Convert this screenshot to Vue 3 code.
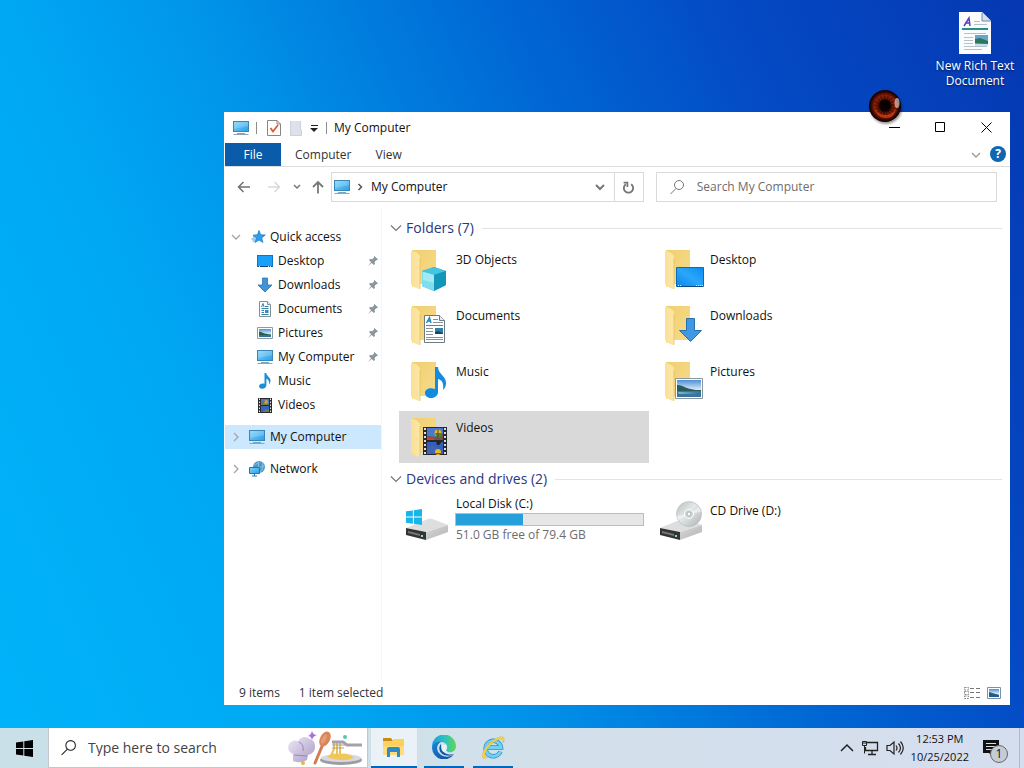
<script setup>
import { ref } from 'vue'

const pinned = [
  { name: 'Desktop', icon: 'desktop', pin: true },
  { name: 'Downloads', icon: 'down', pin: true },
  { name: 'Documents', icon: 'doc', pin: true },
  { name: 'Pictures', icon: 'picture', pin: true },
  { name: 'My Computer', icon: 'pc', pin: true },
  { name: 'Music', icon: 'note', pin: false },
  { name: 'Videos', icon: 'film', pin: false }
]
const folders = [
  { name: '3D Objects', icon: 'cube' },
  { name: 'Desktop', icon: 'f-desktop' },
  { name: 'Documents', icon: 'f-doc' },
  { name: 'Downloads', icon: 'f-down' },
  { name: 'Music', icon: 'f-music' },
  { name: 'Pictures', icon: 'f-picture' },
  { name: 'Videos', icon: 'f-film' }
]
const selected = ref('Videos')
const disk = { total: 79.4, free: 51.0 }
const usedPercent = ((disk.total - disk.free) / disk.total) * 100
const query = ref('')
const taskQuery = ref('')
</script>

<template>
  <div class="screen">
    <svg class="defs" aria-hidden="true">
      <defs>
        <linearGradient id="gScreen" x1="0" y1="0" x2="1" y2="1">
          <stop offset="0" stop-color="#7fd6fb" /><stop offset="1" stop-color="#2c9de8" />
        </linearGradient>
        <linearGradient id="gDesk" x1="0" y1="1" x2="1" y2="0">
          <stop offset="0" stop-color="#0a86e8" /><stop offset=".5" stop-color="#2aa6fb" /><stop offset="1" stop-color="#0d8cf0" />
        </linearGradient>
        <linearGradient id="gBack" x1="0" y1="0" x2="1" y2="1">
          <stop offset="0" stop-color="#f0cf70" /><stop offset="1" stop-color="#f8dc8c" />
        </linearGradient>
        <linearGradient id="gFront" x1="0" y1="0" x2="1" y2="0">
          <stop offset="0" stop-color="#fbe094" /><stop offset="1" stop-color="#fbe7a9" />
        </linearGradient>
        <linearGradient id="gSky" x1="0" y1="0" x2="0" y2="1">
          <stop offset="0" stop-color="#4e8fd6" /><stop offset=".55" stop-color="#d4e8f6" /><stop offset="1" stop-color="#7fa9c6" />
        </linearGradient>
        <linearGradient id="gDrive" x1="0" y1="0" x2="1" y2="1">
          <stop offset="0" stop-color="#d8d8d8" /><stop offset="1" stop-color="#b4b4b4" />
        </linearGradient>
        <linearGradient id="gDisc" x1="0" y1="0" x2="1" y2="1">
          <stop offset="0" stop-color="#b9c1c2" /><stop offset=".45" stop-color="#e3e7e7" /><stop offset="1" stop-color="#abb3b4" />
        </linearGradient>
        <linearGradient id="gEdgeTop" x1="0" y1="0" x2="1" y2="0">
          <stop offset="0" stop-color="#1c9de0" /><stop offset=".55" stop-color="#2fc3c0" /><stop offset="1" stop-color="#62d74f" />
        </linearGradient>
        <linearGradient id="gEdgeLow" x1="0" y1="0" x2="1" y2="1">
          <stop offset="0" stop-color="#1a86d6" /><stop offset="1" stop-color="#10489c" />
        </linearGradient>
        <radialGradient id="gIris" cx=".5" cy=".5" r=".5">
          <stop offset="0" stop-color="#050100" /><stop offset=".3" stop-color="#120200" />
          <stop offset=".45" stop-color="#4d0d03" /><stop offset=".7" stop-color="#7d1a05" />
          <stop offset=".88" stop-color="#2d0601" /><stop offset="1" stop-color="#0b0100" />
        </radialGradient>
        <linearGradient id="gHat" x1="0" y1="0" x2="1" y2="1">
          <stop offset="0" stop-color="#eeeaf6" /><stop offset="1" stop-color="#a999c6" />
        </linearGradient>
      </defs>

      <symbol id="pc" viewBox="0 0 16 16">
        <rect x=".5" y="1.500" width="15" height="10" fill="url(#gScreen)" stroke="#3a87b5" />
        <path d="M1 2h14v4L1 9z" fill="#fff" opacity=".18" />
        <path d="M.5 14.500h15" stroke="#8fa3b0" fill="none" /><path d="M4 13.500h8" stroke="#6fa9c9" />
      </symbol>
      <symbol id="desktop" viewBox="0 0 16 16">
        <rect x=".5" y="2.500" width="15" height="11" fill="#1ba0fa" stroke="#0f75c2" />
        <path d="M1 13.500h14" stroke="#0a4a86" /><path d="M2 13.500h1M11 13.500h1M13 13.500h1" stroke="#d9efff" />
      </symbol>
      <symbol id="down" viewBox="0 0 16 16">
        <path d="M5.500 1h5v7h4.500L8 15 1 8h4.500z" fill="#4193d8" stroke="#2b75ba" stroke-width=".8" />
      </symbol>
      <symbol id="doc" viewBox="0 0 16 16">
        <path d="M2.500.5h8l3 3v12h-11z" fill="#fcfeff" stroke="#7f929c" /><path d="M10.500.5v3h3" fill="#e5edf0" stroke="#7f929c" />
        <path d="M4.500 6 6 2.500 7 6M8 5.500h3.500M4.500 7.500h7M4.500 9.500h2.500M4.500 11.500h2.500M4.500 13.500h7" stroke="#3585aa" fill="none" />
        <path d="M8 9h3.500v3H8z" fill="#3f8db1" />
      </symbol>
      <symbol id="picture" viewBox="0 0 16 16">
        <path d="M.5 2.500h15v11H.5z" fill="#fff" stroke="#8d9ba5" /><path d="M2 4h12v8H2z" fill="url(#gSky)" />
        <path d="M2 6.500c3 .3 5 2.500 12 3V10H2z" fill="#28604f" /><path d="M2 10h12v2H2z" fill="#376f9a" />
      </symbol>
      <symbol id="note" viewBox="0 0 16 16">
        <path d="M7.500 0h1.700c.2 3 4.300 4.200 4.300 7.500 0 1.700-.8 3.200-1.600 3.900.8-3-.4-5.200-2.500-5.700V12c0 2.100-1.900 3.700-4.100 3.700s-3.500-1.200-3.200-2.800c.3-1.800 2.600-3 5.400-2.200z" fill="#178ede" />
      </symbol>
      <symbol id="film" viewBox="0 0 16 16">
        <path d="M1 1h14v15H1z" fill="#282a2d" /><path d="M4 2h8v6H4z" fill="#4d75c8" /><path d="M4 9h8v6H4z" fill="#3763bc" />
        <path d="M2.500 1.500V16M13.500 1.500V16" stroke="#eee" stroke-dasharray="1.500 1.500" />
        <path d="m4 5 8 1v2H4zM6 14l6-2v3H6z" fill="#6b7b50" /><circle cx="9" cy="5" r="2" fill="#c9a336" /><path d="M5 4h3v1H5zM8 12h3v1H8z" fill="#d0472b" />
      </symbol>
      <symbol id="star" viewBox="0 0 16 16">
        <path d="m8 1.500 1.700 4.300 4.600.2-3.600 2.900 1.200 4.600L8 11l-4 2.500 1.400-4.600L2 6.200l4.400-.4z" fill="#2f9df0" stroke="#1779c6" stroke-width=".7" />
        <path d="M2 8h3M.5 10h4M1.500 12h2.500" stroke="#3c9fe6" />
      </symbol>
      <symbol id="network" viewBox="0 0 16 16">
        <circle cx="10" cy="6" r="6" fill="#4b9ac9" /><path d="M5.500 3.500q3 0 4.500-3M9.500 1q-1 5 2 10M6 6.500q5 1 9.500-2M13.500 2q1.500 4-1 8" stroke="#a9d8f1" fill="none" stroke-width=".6" />
        <path d="M.5 6.500h10v6H.5z" fill="url(#gScreen)" stroke="#1878b8" /><path d="M5.500 13v2M3 15h5" stroke="#297eaf" fill="none" />
      </symbol>
      <symbol id="pin" viewBox="0 0 12 12">
        <path d="m7.500 1 3.500 3.500-1 .7-.6-.2-1.700 1.800.2 2.200-1 1L4.800 7.900 1 11l3.100-3.800L2 5.100l1-1 2.200.2L7 2.600l-.2-.6z" fill="#8b959c" />
      </symbol>
      <symbol id="chev-down" viewBox="0 0 12 12"><path d="m2 4 4 4 4-4" fill="none" stroke="currentColor" stroke-width="1.300" /></symbol>
      <symbol id="chev-wide" viewBox="0 0 12 12"><path d="m1 3.500 5 5 5-5" fill="none" stroke="currentColor" stroke-width="1.200" /></symbol>
      <symbol id="chev-right" viewBox="0 0 12 12"><path d="m4 2 4 4-4 4" fill="none" stroke="currentColor" stroke-width="1.300" /></symbol>
      <symbol id="lens" viewBox="0 0 16 16"><circle cx="10" cy="6" r="4.500" fill="none" stroke="currentColor" /><path d="M7 9.500 1.500 15" stroke="currentColor" /></symbol>

      <symbol id="folder" viewBox="0 0 48 48">
        <path d="M8 5h24v34H15L8 42z" fill="url(#gBack)" /><path d="M7 6.500 9 6c3 1 7 3 7 7v31c-3 0-8-3-9-5z" fill="url(#gFront)" /><path d="M16 13v31" stroke="#e5bd59" stroke-width=".7" />
      </symbol>
      <symbol id="cube" viewBox="0 0 48 48">
        <path d="m18 26 12-4 12 4v14l-12 6-12-5z" fill="#1ba8c8" /><path d="m18 26 12 3v17l-12-5z" fill="#7eddee" />
        <path d="m18 26 12-4 12 4-12 4z" fill="#45c3df" /><path d="m30 30 12-4v14l-12 6z" fill="#1297bb" /><path d="m19 27 11 3v8l-11-3z" fill="#b6f0f5" opacity=".65" />
      </symbol>
      <symbol id="f-desktop" viewBox="0 0 48 48">
        <path d="M18.500 22.500h27v19h-27z" fill="url(#gDesk)" stroke="#0d6bb5" /><path d="M19 41.500h26" stroke="#084a85" /><path d="M20 40.500h3M38 40.500h7" stroke="#d6efff" stroke-dasharray="1 1" />
      </symbol>
      <symbol id="f-doc" viewBox="0 0 48 48">
        <path d="M20.500 14.500h15l5 5v22h-20z" fill="#fff" stroke="#6c7b83" /><path d="M35.500 14.500v5h5" fill="#e6eaf0" stroke="#6c7b83" />
        <path d="m22.500 22 3-5.500L27 22m-3-2h3" stroke="#1f83b9" fill="none" stroke-width="1.400" /><path d="M22 24.500h17" stroke="#1ba0a6" />
        <path d="M29 18.500h5M29 21.500h10M22 27.500h7M22 30.500h7M22 33.500h7M22 36.500h17M22 38.500h17" stroke="#83939b" /><path d="M31 27h8v6h-8z" fill="#2d80ac" /><path d="m31 31 3-1 5 2v1h-8z" fill="#17495c" />
      </symbol>
      <symbol id="f-down" viewBox="0 0 48 48">
        <path d="M28.500 17.500h8v12h7L32.500 40.500l-11-11h7z" fill="#3f98e4" stroke="#2770b2" />
      </symbol>
      <symbol id="f-music" viewBox="0 0 48 48">
        <path d="M31 10h3c0 7 8 9 8 16 0 3-1 5-3 7 1-7-1-10-5-11v13c0 4-4 6-7 6s-6-2-6-5c0-4 5-6 10-4z" fill="#128ce0" />
      </symbol>
      <symbol id="f-picture" viewBox="0 0 48 48">
        <path d="M17.500 21.500h27v20h-27z" fill="#fff" stroke="#8b969c" /><path d="M19 23h24v17H19z" fill="url(#gSky)" />
        <path d="M19 28c5-1 8 5 24 5v2H19z" fill="#275d58" /><path d="M19 34h24v6H19z" fill="#3876a1" /><path d="m20 35 20 1-19 1z" fill="#87b6cb" />
      </symbol>
      <symbol id="f-film" viewBox="0 0 48 48">
        <path d="M19 14h24v28H19z" fill="#26282c" /><path d="M23 15h16v12H23z" fill="#4978cc" /><path d="M23 29h16v12H23z" fill="#335eb9" />
        <path d="M21 15v27M41 15v27" stroke="#dce0e4" stroke-width="2" stroke-dasharray="2 2" />
        <path d="m23 23 8 1 8-3v6H23z" fill="#79513e" /><path d="M23 24q4 2 7 1v2h-7z" fill="#d6402e" /><circle cx="34" cy="20" r="3.500" fill="#e3b826" /><path d="M31 20h7v2l-2 3h-3z" fill="#3c8b3d" /><path d="M34 16v10" stroke="#8b2e28" />
        <path d="M23 35q4-5 8-1t8 2v5H23z" fill="#4063b5" /><circle cx="34" cy="39" r="3" fill="#e7b927" /><path d="M32 28h5v2l-2 2h-2z" fill="#1d2824" /><path d="M30 40h8v1h-8z" fill="#cb332a" />
      </symbol>
      <symbol id="drive" viewBox="0 0 48 48">
        <path d="M2 32 24 23q3-1 7 1l13 5-22 7z" fill="#dedede" /><path d="m2 32 20 4v8L2 39z" fill="#343434" /><path d="m22 36 22-7v7L22 44z" fill="url(#gDrive)" />
        <path d="m4 35 12 3v2L4 37z" fill="#777" /><path d="M17 39h2v2h-2z" fill="#77e2b4" />
      </symbol>
      <symbol id="winlogo" viewBox="0 0 17 17"><path d="m0 2.500 7.300-1V8H0zM8.300 1.300 17 0v8H8.300zM0 9h7.300v6.600L0 14.600zM8.300 9H17v8l-8.700-1.200z" fill="currentColor" /></symbol>
    </svg>

    <main class="desk">
      <a href="#" class="shortcut">
        <svg viewBox="0 0 32 42" width="32" height="42">
          <path d="M0 0h23l9 9v33H0z" fill="#fafcfd" /><path d="M23 0v9h9z" fill="#d5e0ec" /><path d="M23 .5V9h9" fill="none" stroke="#7389a8" />
          <path d="m5 14 5-8 1 8m-5-3h5" stroke="#5b3fc0" stroke-width="1.500" fill="none" /><path d="M15 9.500h6M15 12.500h13M5 21.500h22M5 25.500h9M5 28.500h9M5 31.500h9M5 34.500h23M5 37.500h18" stroke="#b4c2c9" />
          <path d="M3 16h26v2H3z" fill="#258e87" /><path d="M16 23h13v11H16z" fill="#64a7cb" /><path d="m16 27 5-1 8 3v3l-13-1z" fill="#2f755d" /><path d="M16 32h13v2H16z" fill="#c3e1ed" />
        </svg>
        <span>New Rich Text Document</span>
      </a>

      <section class="window" aria-label="My Computer">
        <header class="titlebar">
          <svg class="i16"><use href="#pc" /></svg>
          <i class="sep"></i>
          <button class="tool" aria-label="Properties">
            <svg viewBox="0 0 14 16" width="14" height="16"><path d="M.5.5H10L13.500 4v11.500H.5z" fill="#fff" stroke="#8c8482" /><path d="M10 .5V4h3.500" fill="none" stroke="#8c8482" /><path d="m3.500 8 2.500 3.500L11 5" fill="none" stroke="#e15b35" stroke-width="1.800" /></svg>
          </button>
          <button class="tool" aria-label="New folder">
            <svg viewBox="0 0 14 16" width="14" height="16"><path d="M1 1h10v9h2v6H1z" fill="#dde1ea" /><path d="M11.500 1v9h1v5.500M1.500 1v14.500h11" fill="none" stroke="#ccd2dc" /></svg>
          </button>
          <button class="tool caret" aria-label="Customize toolbar">
            <svg viewBox="0 0 8 8" width="8" height="8"><path d="M1 1.500h7" stroke="#222" /><path d="M0 4h8L4 8z" fill="#222" /></svg>
          </button>
          <i class="sep"></i>
          <h1>My Computer</h1>
          <div class="controls">
            <button aria-label="Minimize"><svg viewBox="0 0 11 11"><path d="M0 5.500h11" stroke="#000" /></svg></button>
            <button aria-label="Maximize"><svg viewBox="0 0 11 11"><path d="M.5.5h9v9h-9z" fill="none" stroke="#000" /></svg></button>
            <button aria-label="Close"><svg viewBox="0 0 11 11"><path d="m.5.5 10 10m0-10-10 10" stroke="#000" /></svg></button>
          </div>
        </header>

        <nav class="ribbon">
          <button class="file">File</button>
          <button>Computer</button>
          <button>View</button>
          <button class="expand" aria-label="Expand ribbon"><svg class="i12"><use href="#chev-down" /></svg></button>
          <button class="help" aria-label="Help">?</button>
        </nav>

        <div class="navbar">
          <button class="arrow" aria-label="Back"><svg viewBox="0 0 14 14"><path d="M13 7H1.500M6.500 2l-5 5 5 5" fill="none" stroke="#707070" stroke-width="1.500" /></svg></button>
          <button class="arrow" aria-label="Forward"><svg viewBox="0 0 14 14"><path d="M1 7h11.500M7.500 2l5 5-5 5" fill="none" stroke="#d9d9d9" stroke-width="1.500" /></svg></button>
          <button class="recent" aria-label="Recent locations"><svg viewBox="0 0 8 8" width="8" height="8"><path d="m1 2 3 3 3-3" fill="none" stroke="#777" stroke-width="1.500" /></svg></button>
          <button class="up" aria-label="Up"><svg viewBox="0 0 14 14"><path d="M7 13.500V2M2 7l5-5 5 5" fill="none" stroke="#777" stroke-width="1.800" /></svg></button>
          <div class="address">
            <svg class="i16 place"><use href="#pc" /></svg>
            <svg class="i12 crumb" viewBox="0 0 12 12"><path d="m4.500 3 3 3-3 3" fill="none" stroke="currentColor" stroke-width="1.500" /></svg>
            <span>My Computer</span>
            <button class="drop" aria-label="Previous locations"><svg viewBox="0 0 12 12"><path d="m2 4 4 4 4-4" fill="none" stroke="#777" stroke-width="2" /></svg></button>
            <button class="refresh" aria-label="Refresh"><svg viewBox="0 0 12 12"><path d="M8.500 3A4.300 4.300 0 1 1 3.500 3" fill="none" stroke="#777" stroke-width="1.700" /><path d="M1.500 1.500H5V5.500" fill="none" stroke="#777" stroke-width="1.600" /></svg></button>
          </div>
          <label class="search">
            <svg class="i16"><use href="#lens" /></svg>
            <input v-model="query" type="text" placeholder="Search My Computer" aria-label="Search My Computer" />
          </label>
        </div>

        <div class="body">
          <nav class="tree">
            <button class="row root open"><svg class="i12"><use href="#chev-down" /></svg><svg class="i16"><use href="#star" /></svg><span>Quick access</span></button>
            <button v-for="p in pinned" :key="p.name" class="row leaf">
              <svg class="i16"><use :href="'#' + p.icon" /></svg><span>{{ p.name }}</span>
              <svg v-if="p.pin" class="i12 pin"><use href="#pin" /></svg>
            </button>
            <button class="row root current"><svg class="i12"><use href="#chev-right" /></svg><svg class="i16"><use href="#pc" /></svg><span>My Computer</span></button>
            <button class="row root"><svg class="i12"><use href="#chev-right" /></svg><svg class="i16"><use href="#network" /></svg><span>Network</span></button>
          </nav>

          <div class="content">
            <h2><svg class="i12"><use href="#chev-wide" /></svg><span>Folders (7)</span></h2>
            <div class="tiles">
              <button v-for="f in folders" :key="f.name" class="tile" :class="{ selected: selected === f.name }" @click="selected = f.name">
                <svg class="i48"><use href="#folder" /><use :href="'#' + f.icon" /></svg>
                <span class="name">{{ f.name }}</span>
              </button>
            </div>
            <h2><svg class="i12"><use href="#chev-wide" /></svg><span>Devices and drives (2)</span></h2>
            <div class="tiles">
              <button class="tile">
                <svg class="i48 logo"><use href="#drive" /><use href="#winlogo" x="2" y="13" width="16" height="16" /></svg>
                <span class="disk">
                  <span>Local Disk (C:)</span>
                  <span class="bar" role="progressbar" aria-label="Space used"><span class="used" :style="{ width: usedPercent + '%' }"></span></span>
                  <span class="free">{{ disk.free.toFixed(1) }} GB free of {{ disk.total }} GB</span>
                </span>
              </button>
              <button class="tile">
                <svg class="i48" viewBox="0 0 48 48"><use href="#drive" />
                  <circle cx="31" cy="18" r="12.500" fill="url(#gDisc)" stroke="#b0b7b8" stroke-width=".6" /><path d="m31 18 10-7 2 5zM31 18l-11 6-1-4z" fill="#fff" opacity=".5" />
                  <circle cx="31" cy="18" r="4.500" fill="#ced5d5" stroke="#fff" /><circle cx="31" cy="18" r="2" fill="#fff" stroke="#a9b2b4" />
                </svg>
                <span class="name">CD Drive (D:)</span>
              </button>
            </div>
          </div>
        </div>

        <footer class="status">
          <span>9 items</span><span>1 item selected</span>
          <button class="details" aria-label="Details view"><svg viewBox="0 0 16 12" width="16" height="12"><path d="M.5.5h4v2.500h-4zM.5 4.500h4v3h-4zM.5 9h4v2.500h-4z" fill="none" stroke="#888" stroke-dasharray="2 1" /><path d="M6 1.500h4M12 1.500h4M6 5.500h4M12 5.500h4M6 10.500h4M12 10.500h4" stroke="#777" /></svg></button>
          <button aria-label="Large icons view"><svg viewBox="0 0 14 12" width="14" height="12"><path d="M.5.5h13v11H.5z" fill="#fff" stroke="#7893a5" /><path d="M2 2h10v8H2z" fill="url(#gSky)" /><path d="m2 5 10 3v2H2z" fill="#225e86" /></svg></button>
        </footer>
      </section>

      <svg class="eye" viewBox="0 0 34 34" aria-hidden="true">
        <circle cx="17" cy="17" r="16" fill="url(#gIris)" />
        <circle cx="17" cy="17" r="9" fill="none" stroke="#e35a17" stroke-width="5" stroke-dasharray="1 2.300" opacity=".25" />
        <path d="M6 18q2 10 11 11t11-9q-4 6-11 6T6 18" fill="#df4b12" opacity=".6" />
        <circle cx="17" cy="16" r="5.500" fill="#080100" /><ellipse cx="29" cy="14" rx="2.500" ry="5" fill="#d9c6c2" opacity=".7" />
      </svg>
    </main>

    <footer class="taskbar">
      <button class="start" aria-label="Start"><svg viewBox="0 0 17 17" width="17" height="17"><use href="#winlogo" /></svg></button>
      <label class="tasksearch">
        <svg viewBox="0 0 16 16" width="17" height="17"><use href="#lens" /></svg>
        <input v-model="taskQuery" type="text" placeholder="Type here to search" aria-label="Type here to search" />
        <svg class="art" viewBox="0 0 78 36" width="78" height="36">
          <path d="M6 24Q-1 21 2 14q3-5 9-3 5-7 12-2 5 1 5 8 0 6-7 8l-1 5q-7 4-14 1z" fill="url(#gHat)" /><path d="m7 25 13 1M12 12q5 2 4 9" stroke="#9988b7" fill="none" />
          <path d="M25 1q1 4 5 4-4 1-5 5-1-4-4-4 3-1 4-5z" fill="#ae70d4" />
          <path d="M36 14 28 33" stroke="#d27b54" stroke-width="3" stroke-linecap="round" /><ellipse cx="38" cy="9" rx="5" ry="8" transform="rotate(28 38 9)" fill="#d9855e" /><ellipse cx="37" cy="9" rx="2" ry="5" transform="rotate(28 37 9)" fill="#e99c71" />
          <ellipse cx="54" cy="30" rx="21" ry="5" fill="#9c9ba6" /><ellipse cx="54" cy="28" rx="20" ry="4" fill="#d9d7df" /><path d="M40 27q5-5 12-3 9-2 15 4-13 5-27-1z" fill="#f0c759" />
          <path d="M47 11v8l-3 7M50 11v15M53 11v13" fill="none" stroke="#ecc250" stroke-width="2" /><path d="M45 12h11l4 3h15" fill="none" stroke="#a5a1ab" stroke-width="3" /><path d="M45 15h13M45 18h12" stroke="#a29fab" />
          <circle cx="58" cy="7" r="2" fill="#55c8aa" /><circle cx="16" cy="33" r="2" fill="#eeb43e" />
        </svg>
      </label>
      <button class="task active" aria-label="File Explorer">
        <svg viewBox="0 0 22 20" width="22" height="20"><path d="M0 1h8l2 3H0z" fill="#c88a16" /><path d="M0 4h10l1-2h10v16H0z" fill="#fbd15c" /><path d="M0 9h21v9H0z" fill="#ffdb79" /><path d="M4 20v-8q0-2 2-2h9q2 0 2 2v8h-3v-5H7v5z" fill="#2e8ac8" /></svg>
      </button>
      <button class="task" aria-label="Microsoft Edge">
        <svg viewBox="0 0 24 24" width="24" height="24"><path d="M0 12A12 12 0 0 1 24 11c0 5-4 7-8 6-2-1-2-2-1-4 1-3-2-6-6-6-5 0-9 4-9 9z" fill="url(#gEdgeTop)" /><path d="M0 13c1-5 5-7 9-6-5 2-5 9-1 12 4 4 11 3 14 0A12 12 0 0 1 0 13z" fill="url(#gEdgeLow)" /><path d="M9 9c-3 3-2 9 3 11 4 1 8 1 10-1-6 2-13-1-13-10z" fill="#0c59a4" /><path d="M10 10c3-1 5 0 5 3-2 3-1 4 1 5-5 0-8-3-6-8z" fill="#e7f2f6" /></svg>
      </button>
      <button class="task" aria-label="Internet Explorer">
        <svg viewBox="0 0 24 24" width="24" height="24"><path d="M19.500 16.500A7.700 7.700 0 1 1 20 12.500H6" fill="none" stroke="#2b8cc8" stroke-width="4.400" /><path d="M19.500 16.500A7.700 7.700 0 1 1 20 12.500H6" fill="none" stroke="#6fd2f5" stroke-width="3" /><path d="M2 23C-2 17 14 0 22 2c2 1 1 4 0 6 0-2 0-4-2-4C14 4 4 14 4 20c0 2 1 2 3 2-2 1-4 2-5 1z" fill="#f5d54b" stroke="#d7a81a" stroke-width=".4" /></svg>
      </button>
      <div class="tray">
        <button aria-label="Show hidden icons"><svg viewBox="0 0 14 14" width="14" height="14"><path d="m1 10 6-6 6 6" fill="none" stroke="#222" stroke-width="1.500" /></svg></button>
        <button aria-label="Network status"><svg viewBox="0 0 18 16" width="18" height="16"><path d="M6 2.500h10.500v8H4.500V7M11 11v3M7 14.500h8" fill="none" stroke="#222" stroke-width="1.300" /><path d="M1.500 1.500h4v4h-4zM3.500 5.500v8M1 3h4" fill="none" stroke="#222" /></svg></button>
        <button aria-label="Volume"><svg viewBox="0 0 18 16" width="18" height="16"><path d="M1 5.500h3L8 2v12l-4-3.500H1z" fill="none" stroke="#222" stroke-width="1.200" /><path d="M10 5.500q2 2.500 0 5M12.500 3.500q4 4.500 0 9M14.500 1.500q5.500 6.500 0 13" fill="none" stroke="#222" stroke-width="1.200" /></svg></button>
        <button class="clock"><span>12:53 PM</span><span>10/25/2022</span></button>
        <button class="notify" aria-label="Notifications"><svg viewBox="0 0 16 17" width="16" height="17"><path d="M0 0h16v13h-6v4l-4-4H0z" fill="#111" /><path d="M3 3.500h10M3 6.500h10M3 9.500h7" stroke="#d5dfec" /></svg><b>1</b></button>
        <i class="show-desktop"></i>
      </div>
    </footer>
  </div>
</template>

<style>
body { margin: 0; }
</style>
<style scoped>
.screen { min-height: 100vh; display: flex; flex-direction: column; font-family: "Open Sans", "Noto Sans", sans-serif; font-size: 12px; line-height: 16px; color: #111; overflow: hidden; background: linear-gradient(66deg, #00b4fa 0%, #00a8f3 25%, #0095ea 39%, #0068d4 61%, #044ac4 78%, #0538b2 100%); }
.defs { position: absolute; width: 0; height: 0; }
button { border: 0; padding: 0; margin: 0; background: none; font: inherit; color: inherit; text-align: left; display: flex; align-items: center; }
input { border: 0; outline: 0; padding: 0; min-width: 0; background: none; font: inherit; color: inherit; }
svg { flex: none; }
.i16 { width: 16px; height: 16px; }
.i12 { width: 12px; height: 12px; }
.i48 { width: 48px; height: 48px; }
.desk { flex: 1; position: relative; }
.shortcut { position: absolute; top: 12px; right: 4px; width: 90px; display: flex; flex-direction: column; align-items: center; gap: 4px; color: #fff; text-align: center; text-decoration: none; line-height: 15px; text-shadow: 0 1px 2px #001c55; }
.eye { position: absolute; top: 89px; right: 122px; width: 34px; height: 34px; filter: drop-shadow(1px 2px 1px rgba(0, 0, 0, .4)); }

.window { position: absolute; top: 112px; right: 14px; bottom: 23px; left: 224px; display: flex; flex-direction: column; background: #fff; }
.titlebar { height: 31px; display: flex; align-items: center; padding-left: 9px; }
.titlebar h1 { margin: 0 0 0 7px; font-size: 12px; font-weight: 400; flex: 1; }
.sep { width: 1px; height: 12px; background: #8b8b8b; margin: 0 0 0 7px; }
.tool { margin-left: 10px; }
.tool + .tool { margin-left: 8px; }
.tool + .caret { margin-left: 7px; }
.caret + .sep { margin-left: 8px; }
.controls { display: flex; align-self: stretch; padding-right: 1px; }
.controls button { width: 46px; justify-content: center; }
.controls svg { width: 11px; height: 11px; }

.ribbon { height: 23px; display: flex; border-bottom: 1px solid #dcdcdc; margin-left: 1px; color: #333; }
.ribbon button { padding: 0 10px 0 14px; }
.ribbon .file { width: 56px; padding: 0; justify-content: center; background: #0a5caa; color: #fff; }
.ribbon .expand { margin-left: auto; padding: 0 8px; color: #999; }
.ribbon .help { width: 16px; height: 16px; padding: 0; margin: 3px 4px 0 0; justify-content: center; border-radius: 50%; background: #0f67b2; color: #fff; font-weight: 700; }

.navbar { height: 40px; display: flex; align-items: center; padding: 0 13px; }
.arrow { width: 30px; }
.arrow svg, .up svg { width: 14px; height: 14px; }
.recent { width: 18px; margin-left: -4px; }
.up { width: 20px; }
.address { flex: 10 1 0; box-sizing: border-box; display: flex; align-items: center; height: 30px; border: 1px solid #d9d9d9; padding-left: 2px; }
.crumb { margin: 0 5px 0 4px; color: #555; }
.drop { margin-left: auto; width: 20px; }
.drop svg { width: 12px; height: 12px; }
.refresh svg { width: 13px; height: 13px; }
.refresh { width: 29px; align-self: stretch; justify-content: center; border-left: 1px solid #d9d9d9; }
.search { flex: 10.6 1 0; box-sizing: border-box; display: flex; align-items: center; gap: 12px; height: 30px; margin-left: 12px; padding-left: 12px; border: 1px solid #d9d9d9; color: #777; }
.search input { flex: 1; }
input::placeholder { color: #6d6d6d; opacity: 1; }

.body { flex: 1; display: flex; }
.tree { width: 156px; padding: 18px 0 0 1px; border-right: 1px solid #f7f7f7; }
.row { width: 100%; height: 24px; }
.root { padding-left: 5px; }
.root .i12 { color: #a5a5a5; }
.root .i16 { margin: 0 5px 0 7px; }
.open .i16 { margin-left: 9px; margin-right: 3px; }
.leaf { padding-left: 32px; }
.leaf .i16 { margin-right: 5px; }
.pin { margin: 0 2px 0 auto; }
.current { margin: 8px 0; background: #cce8ff; }

.content { flex: 1; padding: 10px 8px 0 8px; }
h2 { display: flex; align-items: center; gap: 4px; margin: 0; height: 22px; font-size: 14px; font-weight: 400; color: #2a3781; }
h2::after { content: ""; flex: 1; height: 1px; margin-left: 4px; background: #e3e3e3; }
h2 .i12 { color: #777; }
.tiles { display: grid; grid-template-columns: repeat(auto-fill, 250px); gap: 4px; padding: 4px 0 5px 9px; }
.tile { height: 52px; align-items: flex-start; padding: 2px 5px 0 5px; }
.tile .i48 { margin-right: 4px; }
.name { padding-top: 7px; }
.selected { background: #d9d9d9; }
.logo { color: #16b5ea; }
.disk { flex: 1; display: flex; flex-direction: column; gap: 1px; }
.bar { height: 11px; margin-left: -1px; border: 1px solid #bcbcbc; background: #e6e6e6; }
.used { display: block; height: 100%; background: #26a0da; }
.free { color: #6d6d6d; }
.status { height: 25px; display: flex; align-items: center; gap: 19px; padding: 0 9px 0 15px; color: #333; }
.status .details { margin-left: auto; }
.status .details + button { margin-left: -12px; }

.taskbar { height: 40px; display: flex; background: linear-gradient(90deg, #c9e0e9, #d2e0ea 50%, #d5deef); }
.start { width: 48px; justify-content: center; color: #000; }
.tasksearch { width: 320px; box-sizing: border-box; display: flex; align-items: center; padding-left: 11px; background: #fff; border: 1px solid #c2c8cb; border-top: 0; font-size: 14px; color: #222; }
.tasksearch input { flex: 1; margin-left: 11px; }
.tasksearch input::placeholder { color: #444; }
.art { margin-right: 2px; }
.task { width: 40px; margin-left: 9px; box-sizing: border-box; justify-content: center; border-bottom: 2px solid #0067bf; }
.active { width: 46px; margin-left: 3px; background: #eaf2f7; }
.active + .task { margin-left: 7px; }
.tray { margin-left: auto; display: flex; align-items: center; gap: 7px; }
.clock { flex-direction: column; align-items: center; line-height: 18px; font-size: 11px; }
.notify { position: relative; margin: 0 13px 0 7px; }
.notify b { position: absolute; left: 7px; top: 5px; width: 16px; height: 16px; border: 1px solid #666; border-radius: 50%; background: #c5ccd6; font-weight: 400; line-height: 16px; text-align: center; }
.show-desktop { width: 4px; height: 40px; border-left: 1px solid #b0b8c6; }
</style>
